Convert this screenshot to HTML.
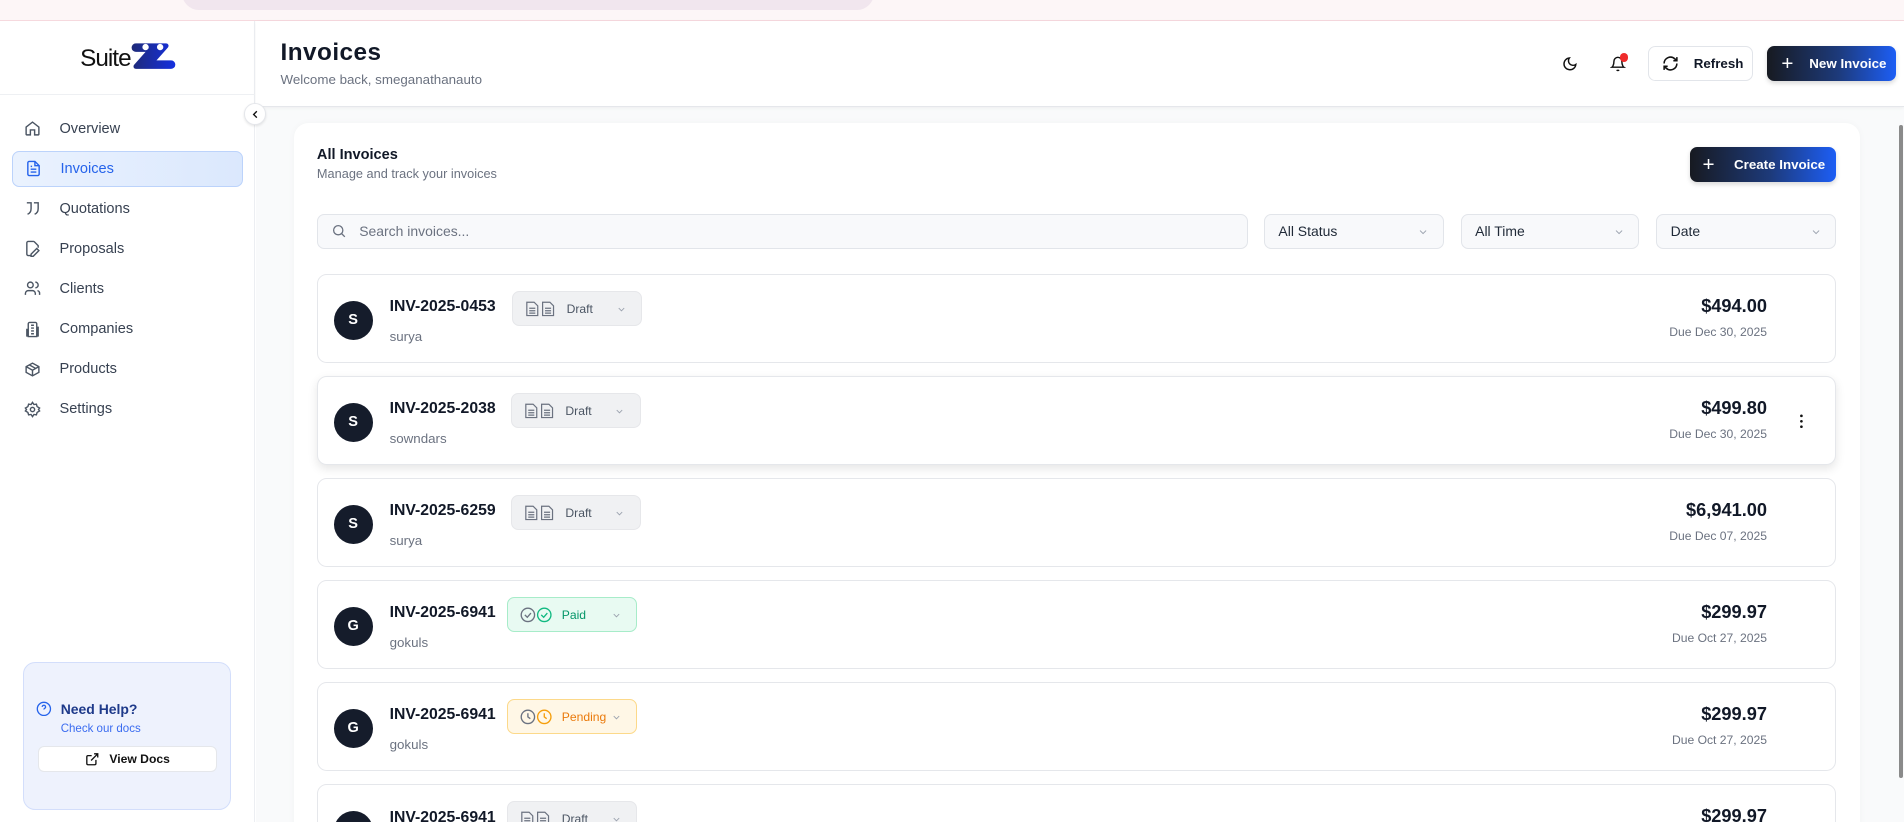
<!DOCTYPE html>
<html><head><meta charset="utf-8"><style>
*{box-sizing:border-box;margin:0;padding:0}
html,body{width:1904px;height:823px;overflow:hidden;background:#fff;font-family:"Liberation Sans",sans-serif;color:#111827}
#z{zoom:1.2143;width:1568px;height:677px;position:relative;overflow:hidden;background:#fff}
.abs{position:absolute}
.strip{left:0;top:0;width:1568px;height:17px;background:#fdf6f7;border-bottom:1px solid #f6d9de}
.pill{left:150px;top:-10px;width:570px;height:18px;background:#f1e6ee;border-radius:0 0 14px 14px}
.side{left:0;top:17px;width:210px;height:661px;border-right:1px solid #eceef2;background:#fff}
.logoline{left:0;top:77px;width:210px;height:1px;background:#eef0f3}
.nav{left:10px;width:190px;height:30px;display:flex;align-items:center;font-size:12px;color:#374151}
.nav svg{position:absolute;left:10px;width:14px;height:14px}
.nav span{position:absolute;left:39px}
.nav.act{background:linear-gradient(90deg,#eaf2fe,#dbe8fd);border:1px solid #bcd3fb;border-radius:6px;color:#2563eb}
.help{left:19px;top:545px;width:171px;height:122px;background:#eef2fd;border:1px solid #d3defb;border-radius:10px}
.main{left:211px;top:88px;width:1357px;height:590px;background:#f9fafb}
.hdr{left:211px;top:17px;width:1357px;height:71px;background:#fff;border-bottom:1px solid #e5e7eb;box-shadow:0 1px 3px rgba(0,0,0,.05)}
.card{left:242px;top:101px;width:1290px;height:600px;background:#fff;border-radius:12px;box-shadow:0 0 6px rgba(0,0,0,.03)}
.btnd{background:linear-gradient(90deg,#171a21 0%,#1d3a7a 55%,#1d5ef5 100%);border-radius:6px;color:#fff;font-weight:700;font-size:11px;display:flex;align-items:center;box-shadow:0 2px 4px rgba(0,0,0,.15)}
.inp{top:176px;height:29px;background:#f8f9fb;border:1px solid #e2e5ea;border-radius:6px;font-size:11.5px;color:#1f2937;display:flex;align-items:center;padding-left:11px}
.chev{position:absolute;right:11px;top:9px}
.row{left:261px;width:1251px;height:73px;border:1px solid #e5e7eb;border-radius:8px;background:#fff}
.av{position:absolute;left:13px;top:21px;width:32px;height:32px;border-radius:50%;background:#151c2b;color:#fff;font-size:12px;font-weight:700;display:flex;align-items:center;justify-content:center}
.id{position:absolute;left:59px;top:19px;font-size:13px;font-weight:700;color:#111827}
.nm{position:absolute;left:59px;top:44px;font-size:11px;color:#6b7280}
.badge{position:absolute;top:13px;width:107px;height:29px;border-radius:6px;background:#f0f1f3;border:1px solid #e6e7ea;font-size:10px;color:#4b5563;display:flex;align-items:center}
.badge .t{position:absolute;left:44px}
.badge .c{position:absolute;right:12px;top:10px}
.amt{position:absolute;right:56px;top:17px;font-size:15px;font-weight:700;color:#111827;text-align:right}
.due{position:absolute;right:56px;top:41px;font-size:10px;color:#6b7280;text-align:right}
</style></head><body><div id="z">
<div class="abs strip"></div><div class="abs pill"></div>
<div class="abs side"></div>
<div class="abs logoline"></div>
<div class="abs" style="left:66px;top:37px;font-size:20px;color:#111;letter-spacing:-.8px">Suite</div>
<svg class="abs" style="left:108px;top:34px" width="37" height="27" viewBox="0 0 37 27"><defs><linearGradient id="lg" x1="0" x2="1"><stop offset="0" stop-color="#1e2a78"/><stop offset="1" stop-color="#1530e0"/></linearGradient></defs><path d="M4 2h25a2 2 0 0 1 1.5 3.3L21 16h12a3.5 3.5 0 0 1 0 7H4a2 2 0 0 1-1.5-3.3L12 9H4a3.5 3.5 0 0 1 0-7z" fill="url(#lg)"/><circle cx="12" cy="5" r="2.6" fill="#fff"/><circle cx="24" cy="5" r="2.6" fill="#fff"/></svg>

<div class="abs nav" style="top:91px"><svg viewBox="0 0 24 24" fill="none" stroke="#4b5563" stroke-width="2"><path d="M3 10l9-7 9 7v10a1 1 0 0 1-1 1h-5v-7h-6v7H4a1 1 0 0 1-1-1z"/></svg><span>Overview</span></div>
<div class="abs nav act" style="top:124px"><svg viewBox="0 0 24 24" fill="none" stroke="#2563eb" stroke-width="2"><path d="M14 2H6a2 2 0 0 0-2 2v16a2 2 0 0 0 2 2h12a2 2 0 0 0 2-2V8z"/><path d="M14 2v6h6M8 13h8M8 17h8M8 9h2"/></svg><span>Invoices</span></div>
<div class="abs nav" style="top:157px"><svg viewBox="0 0 24 24" fill="none" stroke="#4b5563" stroke-width="2"><path d="M4 4h6v8c0 4-2 7-5 8M14 4h6v8c0 4-2 7-5 8"/></svg><span>Quotations</span></div>
<div class="abs nav" style="top:190px"><svg viewBox="0 0 24 24" fill="none" stroke="#4b5563" stroke-width="2"><path d="M14 2H6a2 2 0 0 0-2 2v16a2 2 0 0 0 2 2h4M14 2l6 6v3M10 20l8-8 3 3-8 8h-3z"/></svg><span>Proposals</span></div>
<div class="abs nav" style="top:223px"><svg viewBox="0 0 24 24" fill="none" stroke="#4b5563" stroke-width="2"><circle cx="9" cy="7" r="4"/><path d="M2 21v-2a4 4 0 0 1 4-4h6a4 4 0 0 1 4 4v2M16 3a4 4 0 0 1 0 8M22 21v-2a4 4 0 0 0-3-4"/></svg><span>Clients</span></div>
<div class="abs nav" style="top:256px"><svg viewBox="0 0 24 24" fill="none" stroke="#4b5563" stroke-width="2"><path d="M6 22V4a2 2 0 0 1 2-2h8a2 2 0 0 1 2 2v18zM6 12H4v10M18 9h2v13M10 6h4M10 10h4M10 14h4M10 18h4"/></svg><span>Companies</span></div>
<div class="abs nav" style="top:289px"><svg viewBox="0 0 24 24" fill="none" stroke="#4b5563" stroke-width="2"><path d="M21 8l-9-5-9 5v8l9 5 9-5zM3 8l9 5 9-5M12 13v8M7.5 5.5l9 5"/></svg><span>Products</span></div>
<div class="abs nav" style="top:322px"><svg viewBox="0 0 24 24" fill="none" stroke="#4b5563" stroke-width="2"><circle cx="12" cy="12" r="3"/><path d="M12 2l2 3 3.5-.5 1 3.4L22 10l-1.5 2 1.5 2-3.5 2.1-1 3.4L14 19l-2 3-2-3-3.5.5-1-3.4L2 14l1.5-2L2 10l3.5-2.1 1-3.4L10 5z"/></svg><span>Settings</span></div>

<div class="abs help"></div>
<svg class="abs" style="left:30px;top:577px" width="13" height="13" viewBox="0 0 24 24" fill="none" stroke="#2563eb" stroke-width="2"><circle cx="12" cy="12" r="10"/><path d="M9.5 9a2.5 2.5 0 1 1 3.5 2.3c-.7.4-1 1-1 1.7M12 17h.01"/></svg>
<div class="abs" style="left:50px;top:577px;font-size:11.5px;font-weight:700;color:#1e3a8a">Need Help?</div>
<div class="abs" style="left:50px;top:595px;font-size:9.5px;color:#3b6cf0">Check our docs</div>
<div class="abs" style="left:31px;top:614px;width:148px;height:22px;background:#fff;border:1px solid #e5e7eb;border-radius:5px;font-size:10px;font-weight:700;color:#111;display:flex;align-items:center;justify-content:center;gap:8px"><svg width="12" height="12" viewBox="0 0 24 24" fill="none" stroke="#111" stroke-width="2.2"><path d="M18 13v6a2 2 0 0 1-2 2H5a2 2 0 0 1-2-2V8a2 2 0 0 1 2-2h6M15 3h6v6M10 14L21 3"/></svg>View Docs</div>

<div class="abs main"></div>
<div class="abs hdr"></div>
<div class="abs" style="left:231px;top:32px;font-size:20px;font-weight:700;color:#111827;letter-spacing:.4px">Invoices</div>
<div class="abs" style="left:231px;top:59px;font-size:11px;color:#6b7280">Welcome back, smeganathanauto</div>
<svg class="abs" style="left:1286px;top:46px" width="13" height="13" viewBox="0 0 24 24" fill="none" stroke="#111" stroke-width="2.2"><path d="M21 12.8A9 9 0 1 1 11.2 3a7 7 0 0 0 9.8 9.8z"/></svg>
<svg class="abs" style="left:1326px;top:46px" width="13" height="13" viewBox="0 0 24 24" fill="none" stroke="#111" stroke-width="2.2"><path d="M6 8a6 6 0 0 1 12 0c0 7 3 9 3 9H3s3-2 3-9M10.3 21a1.9 1.9 0 0 0 3.4 0"/></svg>
<div class="abs" style="left:1334px;top:44px;width:7px;height:7px;border-radius:50%;background:#ef2b2b"></div>
<div class="abs" style="left:1357px;top:38px;width:87px;height:29px;border:1px solid #e2e5ea;border-radius:6px;background:#fff;font-size:11px;font-weight:700;display:flex;align-items:center"><svg style="position:absolute;left:11px" width="14" height="14" viewBox="0 0 24 24" fill="none" stroke="#111" stroke-width="2.2"><path d="M3 12a9 9 0 0 1 15-6.7L21 8M21 3v5h-5M21 12a9 9 0 0 1-15 6.7L3 16M3 21v-5h5"/></svg><span style="position:absolute;left:37px">Refresh</span></div>
<div class="abs btnd" style="left:1455px;top:38px;width:106px;height:29px"><span style="position:absolute;left:12px;font-size:17px;font-weight:400">+</span><span style="position:absolute;left:35px">New Invoice</span></div>
<div class="abs" style="left:201px;top:85px;width:18px;height:18px;border-radius:50%;background:#fff;border:1px solid #e5e7eb;box-shadow:0 1px 2px rgba(0,0,0,.1)"><svg style="position:absolute;left:4px;top:4px" width="9" height="9" viewBox="0 0 24 24" fill="none" stroke="#111" stroke-width="3"><path d="M15 5l-7 7 7 7"/></svg></div>

<div class="abs card"></div>
<div class="abs" style="left:261px;top:121px;font-size:12px;font-weight:700">All Invoices</div>
<div class="abs" style="left:261px;top:137px;font-size:10.5px;color:#6b7280">Manage and track your invoices</div>
<div class="abs btnd" style="left:1392px;top:121px;width:120px;height:29px"><span style="position:absolute;left:10px;font-size:17px;font-weight:400">+</span><span style="position:absolute;left:36px">Create Invoice</span></div>

<div class="abs inp" style="left:261px;width:767px;color:#6b7280"><svg width="13" height="13" viewBox="0 0 24 24" fill="none" stroke="#6b7280" stroke-width="2"><circle cx="11" cy="11" r="7"/><path d="M21 21l-5-5"/></svg><span style="margin-left:10px">Search invoices...</span></div>
<div class="abs inp" style="left:1041px;width:148px">All Status<svg class="chev" width="10" height="10" viewBox="0 0 24 24" fill="none" stroke="#9ca3af" stroke-width="2"><path d="M6 9l6 6 6-6"/></svg></div>
<div class="abs inp" style="left:1203px;width:147px">All Time<svg class="chev" width="10" height="10" viewBox="0 0 24 24" fill="none" stroke="#9ca3af" stroke-width="2"><path d="M6 9l6 6 6-6"/></svg></div>
<div class="abs inp" style="left:1364px;width:148px">Date<svg class="chev" width="10" height="10" viewBox="0 0 24 24" fill="none" stroke="#9ca3af" stroke-width="2"><path d="M6 9l6 6 6-6"/></svg></div>

<div class="abs row" style="top:226px"><div class="av">S</div><div class="id">INV-2025-0453</div><div class="nm">surya</div>
<div class="badge" style="left:160px"><svg style="position:absolute;left:10px" width="26" height="13" viewBox="0 0 26 13" fill="none" stroke="#6b7280" stroke-width="1"><path d="M1.5 1h6l3 3v8h-9zM3.5 6h5M3.5 8h5M3.5 10h5M14.5 1h6l3 3v8h-9zM16.5 6h5M16.5 8h5M16.5 10h5"/></svg><span class="t">Draft</span><svg class="c" width="9" height="9" viewBox="0 0 24 24" fill="none" stroke="#9ca3af" stroke-width="2"><path d="M6 9l6 6 6-6"/></svg></div>
<div class="amt">$494.00</div><div class="due">Due Dec 30, 2025</div></div>

<div class="abs row" style="top:310px;box-shadow:0 3px 8px rgba(0,0,0,.1)"><div class="av">S</div><div class="id">INV-2025-2038</div><div class="nm">sowndars</div>
<div class="badge" style="left:159px"><svg style="position:absolute;left:10px" width="26" height="13" viewBox="0 0 26 13" fill="none" stroke="#6b7280" stroke-width="1"><path d="M1.5 1h6l3 3v8h-9zM3.5 6h5M3.5 8h5M3.5 10h5M14.5 1h6l3 3v8h-9zM16.5 6h5M16.5 8h5M16.5 10h5"/></svg><span class="t">Draft</span><svg class="c" width="9" height="9" viewBox="0 0 24 24" fill="none" stroke="#9ca3af" stroke-width="2"><path d="M6 9l6 6 6-6"/></svg></div>
<div class="amt">$499.80</div><div class="due">Due Dec 30, 2025</div>
<svg style="position:absolute;left:1220px;top:30px" width="4" height="12" viewBox="0 0 4 12" fill="#111"><circle cx="2" cy="1.5" r="1.1"/><circle cx="2" cy="6" r="1.1"/><circle cx="2" cy="10.5" r="1.1"/></svg></div>

<div class="abs row" style="top:394px"><div class="av">S</div><div class="id">INV-2025-6259</div><div class="nm">surya</div>
<div class="badge" style="left:159px"><svg style="position:absolute;left:10px" width="26" height="13" viewBox="0 0 26 13" fill="none" stroke="#6b7280" stroke-width="1"><path d="M1.5 1h6l3 3v8h-9zM3.5 6h5M3.5 8h5M3.5 10h5M14.5 1h6l3 3v8h-9zM16.5 6h5M16.5 8h5M16.5 10h5"/></svg><span class="t">Draft</span><svg class="c" width="9" height="9" viewBox="0 0 24 24" fill="none" stroke="#9ca3af" stroke-width="2"><path d="M6 9l6 6 6-6"/></svg></div>
<div class="amt">$6,941.00</div><div class="due">Due Dec 07, 2025</div></div>

<div class="abs row" style="top:478px"><div class="av">G</div><div class="id">INV-2025-6941</div><div class="nm">gokuls</div>
<div class="badge" style="left:156px;background:#e8faf2;border-color:#a7ecc9;color:#059669"><svg style="position:absolute;left:10px" width="27" height="13" viewBox="0 0 27 13" fill="none" stroke-width="1.1"><circle cx="6.5" cy="6.5" r="5.5" stroke="#6b7280"/><path d="M4 6.5l2 2 3-3.5" stroke="#6b7280"/><circle cx="20" cy="6.5" r="5.5" stroke="#10b981"/><path d="M17.5 6.5l2 2 3-3.5" stroke="#10b981"/></svg><span class="t">Paid</span><svg class="c" width="9" height="9" viewBox="0 0 24 24" fill="none" stroke="#9ca3af" stroke-width="2"><path d="M6 9l6 6 6-6"/></svg></div>
<div class="amt">$299.97</div><div class="due">Due Oct 27, 2025</div></div>

<div class="abs row" style="top:562px"><div class="av">G</div><div class="id">INV-2025-6941</div><div class="nm">gokuls</div>
<div class="badge" style="left:156px;background:#fff7e6;border-color:#fcd98a;color:#ea7a0c"><svg style="position:absolute;left:10px" width="27" height="13" viewBox="0 0 27 13" fill="none" stroke-width="1.1"><circle cx="6.5" cy="6.5" r="5.5" stroke="#6b7280"/><path d="M6.5 3.5v3l2 1.5" stroke="#6b7280"/><circle cx="20" cy="6.5" r="5.5" stroke="#f59e0b"/><path d="M20 3.5v3l2 1.5" stroke="#f59e0b"/></svg><span class="t">Pending</span><svg class="c" width="9" height="9" viewBox="0 0 24 24" fill="none" stroke="#9ca3af" stroke-width="2"><path d="M6 9l6 6 6-6"/></svg></div>
<div class="amt">$299.97</div><div class="due">Due Oct 27, 2025</div></div>

<div class="abs row" style="top:646px"><div class="av">G</div><div class="id">INV-2025-6941</div><div class="nm">gokuls</div>
<div class="badge" style="left:156px"><svg style="position:absolute;left:10px" width="26" height="13" viewBox="0 0 26 13" fill="none" stroke="#6b7280" stroke-width="1"><path d="M1.5 1h6l3 3v8h-9zM3.5 6h5M3.5 8h5M3.5 10h5M14.5 1h6l3 3v8h-9zM16.5 6h5M16.5 8h5M16.5 10h5"/></svg><span class="t">Draft</span><svg class="c" width="9" height="9" viewBox="0 0 24 24" fill="none" stroke="#9ca3af" stroke-width="2"><path d="M6 9l6 6 6-6"/></svg></div>
<div class="amt">$299.97</div><div class="due">Due Oct 27, 2025</div></div>

<div class="abs" style="left:1564px;top:103px;width:3px;height:538px;background:#8a8a8a;border-radius:2px"></div>
</div></body></html>
